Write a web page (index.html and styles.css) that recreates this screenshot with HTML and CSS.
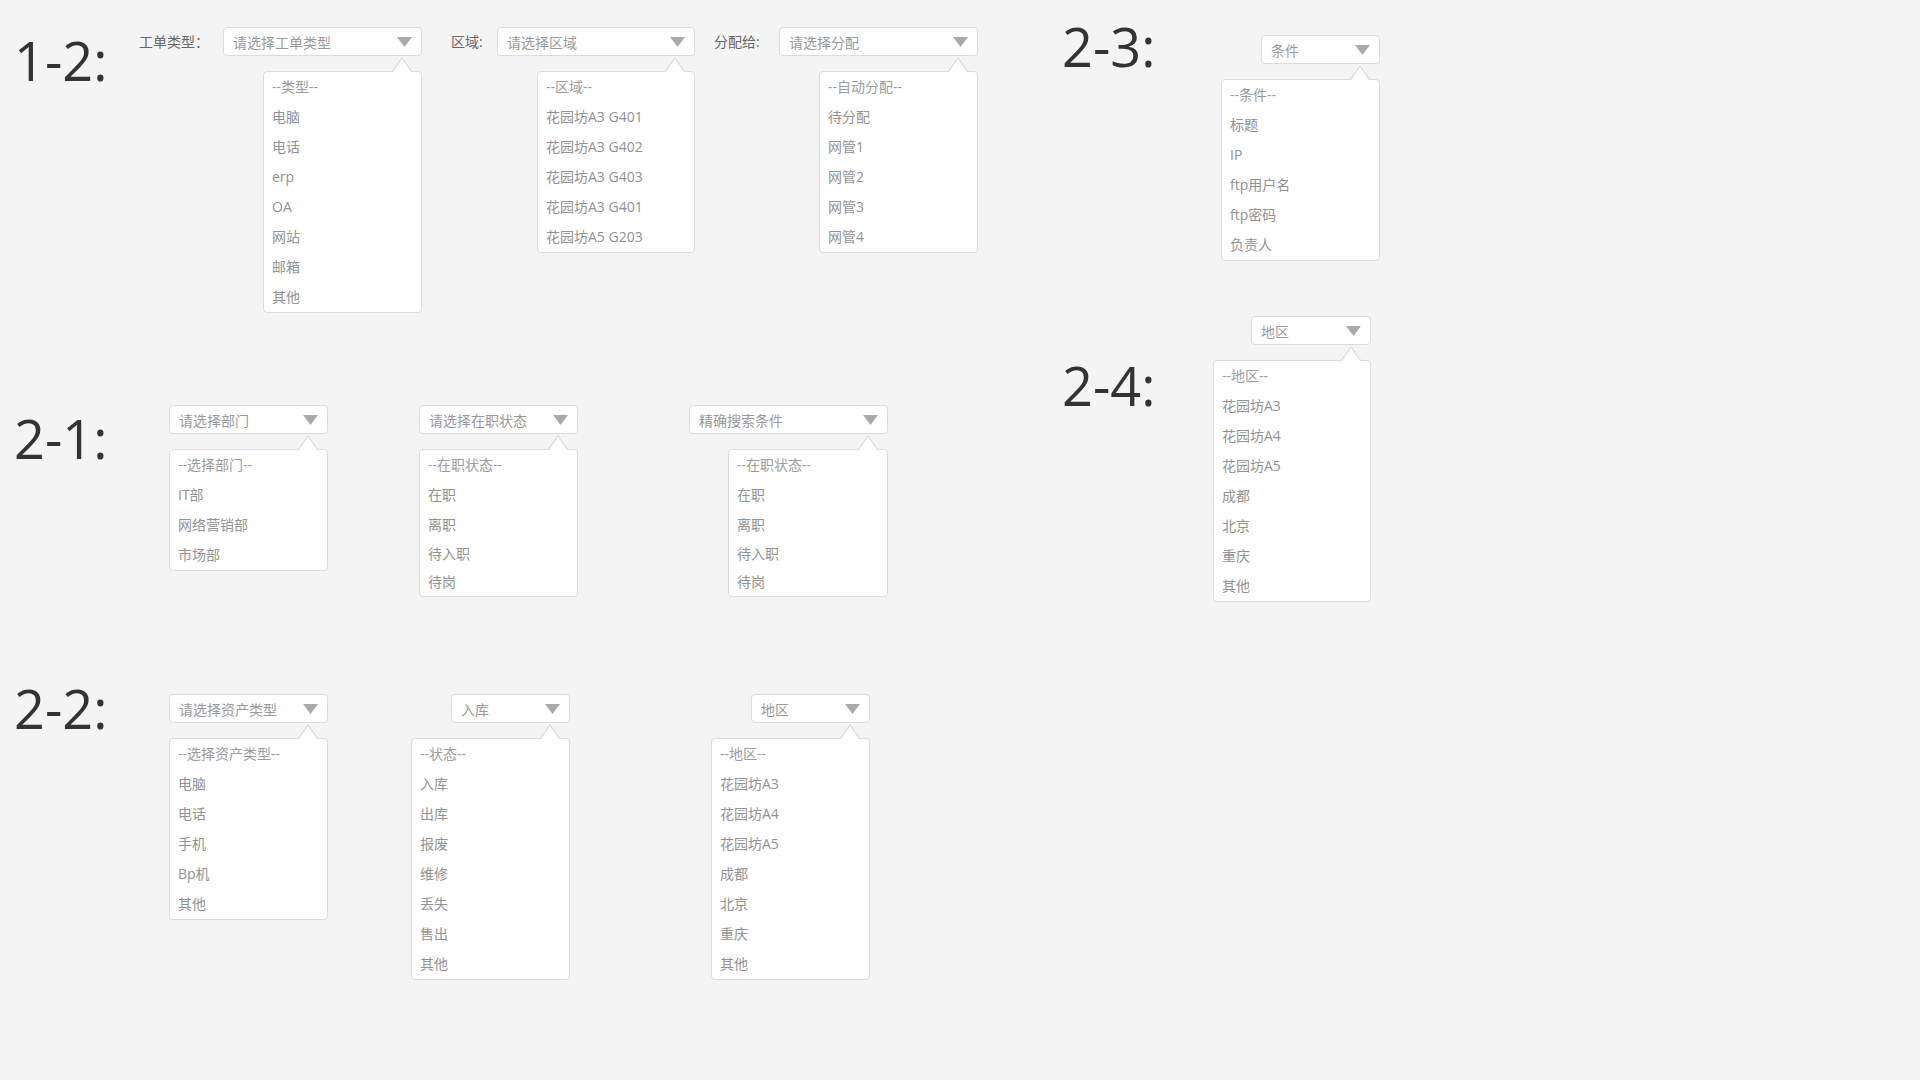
FILE: index.html
```html
<!DOCTYPE html>
<html lang="zh-CN">
<head>
<meta charset="utf-8">
<title>下拉框规范</title>
<link rel="stylesheet" href="styles.css">
</head>
<body>
<div class="board">
  <div class="col col-left">
    <section class="sec sec-12">
      <h2 class="sec-title t125">1-2:</h2>
      <div class="row">
        <div class="field">
          <span class="label lw84">工单类型<span class="colon">：</span></span>
          <div class="picker">
            <div class="select w199"><span>请选择工单类型</span></div>
            <ul class="drop w159">
              <li class="head">--类型--</li>
              <li>电脑</li>
              <li>电话</li>
              <li>erp</li>
              <li>OA</li>
              <li>网站</li>
              <li>邮箱</li>
              <li>其他</li>
            </ul>
          </div>
        </div>
        <div class="field ml29">
          <span class="label lw46">区域:</span>
          <div class="picker">
            <div class="select w198"><span>请选择区域</span></div>
            <ul class="drop w158">
              <li class="head">--区域--</li>
              <li>花园坊A3 G401</li>
              <li>花园坊A3 G402</li>
              <li>花园坊A3 G403</li>
              <li>花园坊A3 G401</li>
              <li>花园坊A5 G203</li>
            </ul>
          </div>
        </div>
        <div class="field ml19">
          <span class="label lw65">分配给:</span>
          <div class="picker">
            <div class="select w199"><span>请选择分配</span></div>
            <ul class="drop w159">
              <li class="head">--自动分配--</li>
              <li>待分配</li>
              <li>网管1</li>
              <li>网管2</li>
              <li>网管3</li>
              <li>网管4</li>
            </ul>
          </div>
        </div>
      </div>
    </section>

    <section class="sec sec-21">
      <h2 class="sec-title t155">2-1:</h2>
      <div class="row">
        <div class="picker">
          <div class="select w159"><span>请选择部门</span></div>
          <ul class="drop w159">
            <li class="head">--选择部门--</li>
            <li>IT部</li>
            <li>网络营销部</li>
            <li>市场部</li>
          </ul>
        </div>
        <div class="picker ml91">
          <div class="select w159"><span>请选择在职状态</span></div>
          <ul class="drop w159">
            <li class="head">--在职状态--</li>
            <li>在职</li>
            <li>离职</li>
            <li class="tight">待入职</li>
            <li class="tight">待岗</li>
          </ul>
        </div>
        <div class="picker ml111">
          <div class="select w199"><span>精确搜索条件</span></div>
          <ul class="drop w160">
            <li class="head">--在职状态--</li>
            <li>在职</li>
            <li>离职</li>
            <li class="tight">待入职</li>
            <li class="tight">待岗</li>
          </ul>
        </div>
      </div>
    </section>

    <section class="sec sec-22">
      <h2 class="sec-title t155">2-2:</h2>
      <div class="row">
        <div class="picker">
          <div class="select w159"><span>请选择资产类型</span></div>
          <ul class="drop w159">
            <li class="head">--选择资产类型--</li>
            <li>电脑</li>
            <li>电话</li>
            <li>手机</li>
            <li>Bp机</li>
            <li>其他</li>
          </ul>
        </div>
        <div class="picker ml83">
          <div class="select w119"><span>入库</span></div>
          <ul class="drop w159">
            <li class="head">--状态--</li>
            <li>入库</li>
            <li>出库</li>
            <li>报废</li>
            <li>维修</li>
            <li>丢失</li>
            <li>售出</li>
            <li>其他</li>
          </ul>
        </div>
        <div class="picker ml141">
          <div class="select w119"><span>地区</span></div>
          <ul class="drop w159">
            <li class="head">--地区--</li>
            <li>花园坊A3</li>
            <li>花园坊A4</li>
            <li>花园坊A5</li>
            <li>成都</li>
            <li>北京</li>
            <li>重庆</li>
            <li>其他</li>
          </ul>
        </div>
      </div>
    </section>
  </div>

  <div class="col col-right">
    <section class="sec sec-23">
      <h2 class="sec-title t159">2-3:</h2>
      <div class="row">
        <div class="picker">
          <div class="select w119"><span>条件</span></div>
          <ul class="drop w159">
            <li class="head">--条件--</li>
            <li>标题</li>
            <li>IP</li>
            <li>ftp用户名</li>
            <li>ftp密码</li>
            <li>负责人</li>
          </ul>
        </div>
      </div>
    </section>

    <section class="sec sec-24">
      <h2 class="sec-title t151">2-4:</h2>
      <div class="row">
        <div class="picker">
          <div class="select w120"><span>地区</span></div>
          <ul class="drop w158">
            <li class="head">--地区--</li>
            <li>花园坊A3</li>
            <li>花园坊A4</li>
            <li>花园坊A5</li>
            <li>成都</li>
            <li>北京</li>
            <li>重庆</li>
            <li>其他</li>
          </ul>
        </div>
      </div>
    </section>
  </div>
</div>
</body>
</html>
```

FILE: styles.css
```css
* {
  box-sizing: border-box;
}

html, body {
  margin: 0;
  padding: 0;
  background: #f4f4f4;
}

body {
  width: 1920px;
  height: 1080px;
  overflow: hidden;
  font-family: "Open Sans", "Noto Sans CJK SC", sans-serif;
  font-size: 14px;
  color: #999;
}

.board {
  display: flex;
  align-items: flex-start;
  padding-left: 14px;
}

.col-left {
  width: 1048px;
  flex: none;
}

.col-right {
  flex: none;
}

/* sections */
.sec {
  display: flex;
  align-items: flex-start;
}

.sec-title {
  flex: none;
  margin: 0;
  font-family: "Open Sans", sans-serif;
  font-weight: 400;
  font-size: 54px;
  line-height: 54px;
  color: #333;
}

.t125 { width: 125px; }
.t151 { width: 151px; }
.t155 { width: 155px; }
.t159 { width: 159px; }

.sec-12 { height: 390px; }
.sec-12 .sec-title { margin-top: 33px; }
.sec-12 .row { margin-top: 27px; }

.sec-21 { height: 290px; }
.sec-21 .sec-title { margin-top: 21px; }
.sec-21 .row { margin-top: 15px; }

.sec-22 .sec-title { margin-top: 1px; }
.sec-22 .row { margin-top: 14px; }

.sec-23 { height: 300px; }
.sec-23 .sec-title { margin-top: 19px; }
.sec-23 .row { margin-top: 35px; }

.sec-24 .sec-title { margin-top: 58px; }
.sec-24 .row { margin-top: 16px; }

.row {
  display: flex;
  align-items: flex-start;
}

.field {
  display: flex;
  align-items: flex-start;
}

.label {
  flex: none;
  line-height: 29px;
  color: #666;
  white-space: nowrap;
}

.colon {
  font-family: "Noto Sans CJK JP", "Noto Sans CJK SC", sans-serif;
}

.lw84 { width: 84px; }
.lw46 { width: 46px; }
.lw65 { width: 65px; }

.ml19 { margin-left: 19px; }
.ml29 { margin-left: 29px; }
.ml83 { margin-left: 83px; }
.ml91 { margin-left: 91px; }
.ml111 { margin-left: 111px; }
.ml141 { margin-left: 141px; }

/* picker = select + open dropdown, right aligned */
.picker {
  flex: none;
  display: flex;
  flex-direction: column;
  align-items: flex-end;
}

.select {
  display: flex;
  align-items: center;
  justify-content: space-between;
  height: 29px;
  padding: 0 9px;
  background: #fff;
  border: 1px solid #dcdcdc;
  border-radius: 4px;
  color: #999;
  white-space: nowrap;
}

.select::after {
  content: "";
  flex: none;
  width: 15px;
  height: 10px;
  margin-top: 1px;
  background: #aaa;
  clip-path: polygon(0 0, 100% 0, 50% 100%);
}

.w119 { width: 119px; }
.w120 { width: 120px; }
.w158 { width: 158px; }
.w159 { width: 159px; }
.w160 { width: 160px; }
.w198 { width: 198px; }
.w199 { width: 199px; }

.drop {
  position: relative;
  list-style: none;
  margin: 15px 0 0;
  padding: 0;
  background: #fff;
  border: 1px solid #dcdcdc;
  border-radius: 4px;
}

/* notch pointing up to the select */
.drop::before,
.drop::after {
  content: "";
  position: absolute;
  width: 0;
  height: 0;
  border-style: solid;
  border-color: transparent;
  border-top-width: 0;
}

.drop::before {
  top: -15px;
  right: 9px;
  border-left-width: 10px;
  border-right-width: 10px;
  border-bottom-width: 14px;
  border-bottom-color: #dcdcdc;
}

.drop::after {
  top: -13px;
  right: 10px;
  border-left-width: 9px;
  border-right-width: 9px;
  border-bottom-width: 13px;
  border-bottom-color: #fff;
}

.drop li {
  height: 30px;
  line-height: 30px;
  padding: 0 8px;
  color: #929292;
  white-space: nowrap;
}

.drop li.head {
  color: #9c9c9c;
}

.drop li.tight {
  height: 28px;
  line-height: 28px;
}
```
